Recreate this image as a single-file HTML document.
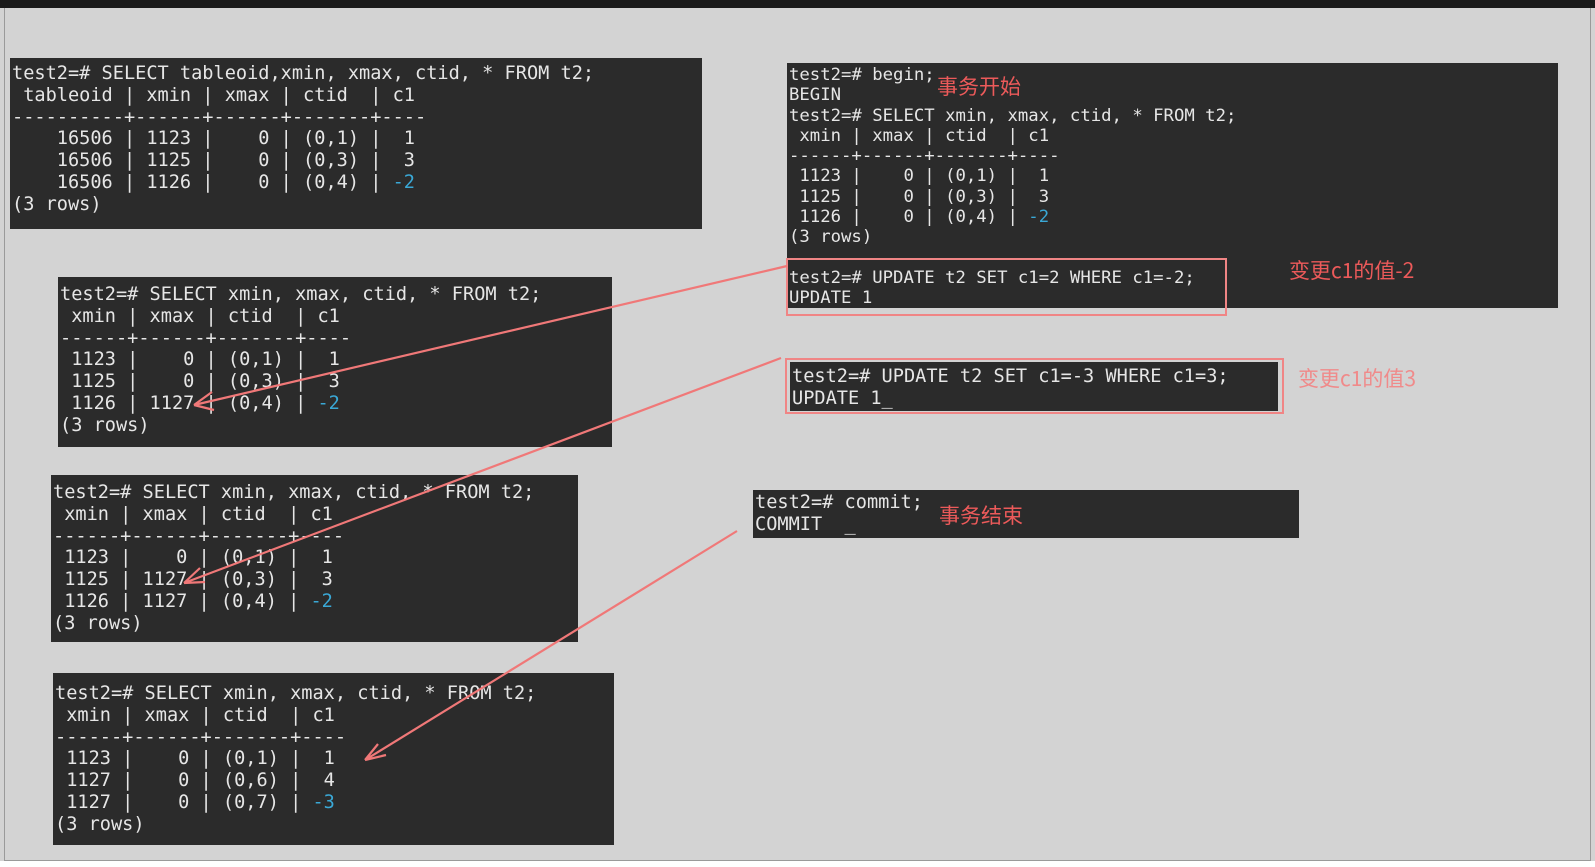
<!DOCTYPE html>
<html><head><meta charset="utf-8"><style>
html,body{margin:0;padding:0;}
body{width:1595px;height:867px;background:#d3d3d3;position:relative;overflow:hidden;font-family:"DejaVu Sans Mono","Liberation Mono",monospace;}
.top{position:absolute;left:0;top:0;width:1595px;height:8px;background:#1a1a1a;}
.frame{position:absolute;left:4px;top:8px;width:1587px;height:853px;border:1px solid #9a9a9a;border-top:none;box-sizing:border-box;}
.bot{position:absolute;left:0;top:861px;width:1595px;height:6px;background:#fff;}
.t{position:absolute;background:#2b2b2b;color:#e6e6e6;margin:0;white-space:pre;font-size:18.6px;line-height:21.8px;padding:2px 2px;box-sizing:border-box;overflow:hidden;}
.s{font-size:17.3px;line-height:20.3px;}
.b{color:#3aa8d6;}
.r{position:absolute;border:2px solid #f08585;box-sizing:border-box;}
.lab{position:absolute;font-family:"Noto Sans CJK SC",sans-serif;color:#ec5a5a;font-size:21px;line-height:24px;white-space:nowrap;}
svg{position:absolute;left:0;top:0;}
</style></head><body>
<div class="top"></div><div class="frame"></div>
<pre class="t" style="left:10px;top:58px;width:692px;height:171px;padding-top:5px;">test2=# SELECT tableoid,xmin, xmax, ctid, * FROM t2;
 tableoid | xmin | xmax | ctid  | c1
----------+------+------+-------+----
    16506 | 1123 |    0 | (0,1) |  1
    16506 | 1125 |    0 | (0,3) |  3
    16506 | 1126 |    0 | (0,4) | <span class="b">-2</span>
(3 rows)</pre>
<pre class="t s" style="left:787px;top:63px;width:771px;height:245px;">test2=# begin;
BEGIN
test2=# SELECT xmin, xmax, ctid, * FROM t2;
 xmin | xmax | ctid  | c1
------+------+-------+----
 1123 |    0 | (0,1) |  1
 1125 |    0 | (0,3) |  3
 1126 |    0 | (0,4) | <span class="b">-2</span>
(3 rows)

test2=# UPDATE t2 SET c1=2 WHERE c1=-2;
UPDATE 1</pre>
<div class="r" style="left:786px;top:258px;width:441px;height:58px;"></div>
<pre class="t" style="left:790px;top:362px;width:488px;height:49px;padding-top:4px;">test2=# UPDATE t2 SET c1=-3 WHERE c1=3;
UPDATE 1_</pre>
<div class="r" style="left:785px;top:358px;width:499px;height:56px;"></div>
<pre class="t" style="left:753px;top:490px;width:546px;height:48px;">test2=# commit;
COMMIT  _</pre>
<pre class="t" style="left:58px;top:277px;width:554px;height:170px;padding-top:7px;">test2=# SELECT xmin, xmax, ctid, * FROM t2;
 xmin | xmax | ctid  | c1
------+------+-------+----
 1123 |    0 | (0,1) |  1
 1125 |    0 | (0,3) |  3
 1126 | 1127 | (0,4) | <span class="b">-2</span>
(3 rows)</pre>
<pre class="t" style="left:51px;top:475px;width:527px;height:167px;padding-top:7px;">test2=# SELECT xmin, xmax, ctid, * FROM t2;
 xmin | xmax | ctid  | c1
------+------+-------+----
 1123 |    0 | (0,1) |  1
 1125 | 1127 | (0,3) |  3
 1126 | 1127 | (0,4) | <span class="b">-2</span>
(3 rows)</pre>
<pre class="t" style="left:53px;top:673px;width:561px;height:172px;padding-top:10px;">test2=# SELECT xmin, xmax, ctid, * FROM t2;
 xmin | xmax | ctid  | c1
------+------+-------+----
 1123 |    0 | (0,1) |  1
 1127 |    0 | (0,6) |  4
 1127 |    0 | (0,7) | <span class="b">-3</span>
(3 rows)</pre>
<div class="lab" style="left:937px;top:74px;">事务开始</div>
<div class="lab" style="left:1289px;top:258px;">变更c1的值-2</div>
<div class="lab" style="left:1298px;top:366px;color:#f08a8a;">变更c1的值3</div>
<div class="lab" style="left:939px;top:503px;">事务结束</div>
<svg width="1595" height="867" fill="none" stroke="#f07878" stroke-width="2.2">
<path d="M787 266 L194 405 M194 405 L212 392 M194 405 L214 410"/>
<path d="M781 358 L184 583 M184 583 L200 568 M184 583 L205 582"/>
<path d="M737 531 L365 760 M365 760 L378 744 M365 760 L386 755"/>
</svg>
<div class="bot"></div>
</body></html>
